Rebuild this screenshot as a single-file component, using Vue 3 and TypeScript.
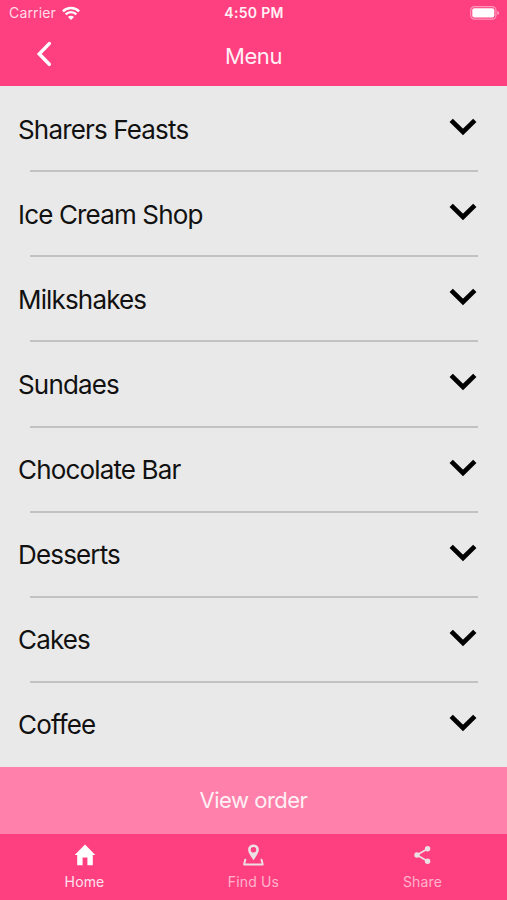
<script setup lang="ts">
import { ref } from 'vue'

interface Category {
  id: number
  name: string
}

const categories: Category[] = [
  'Sharers Feasts',
  'Ice Cream Shop',
  'Milkshakes',
  'Sundaes',
  'Chocolate Bar',
  'Desserts',
  'Cakes',
  'Coffee',
].map((name, id) => ({ id, name }))

type Tab = 'home' | 'find' | 'share'
const activeTab = ref<Tab>('home')
</script>

<template>
  <div class="screen">
    <header class="header">
      <div class="status">
        <div class="carrier">
          <span>Carrier</span>
          <svg class="wifi" viewBox="0 0 18 14" width="18" height="14">
            <g fill="none" stroke="#fff" stroke-width="2.4">
              <path d="M0.9 5.3C5.4 .9 12.6 .9 17.1 5.3" />
              <path d="M3.7 8.3C6.6 5.4 11.4 5.4 14.3 8.3" />
            </g>
            <path d="M6 10.9C7.6 9.3 10.4 9.3 12 10.9L9 13.9Z" fill="#fff" />
          </svg>
        </div>
        <span class="time">4:50 PM</span>
        <svg class="battery" viewBox="0 0 30 14" width="30" height="14">
          <rect x=".7" y=".7" width="25.2" height="12.4" rx="3.6" fill="none" stroke="#fff" stroke-opacity=".45" stroke-width="1.2" />
          <rect x="2.3" y="2.3" width="22" height="9.2" rx="2" fill="#fff" />
          <path d="M27.3 4.7C29.7 5.5 29.7 8.3 27.3 9.1Z" fill="#fff" fill-opacity=".5" />
        </svg>
      </div>
      <div class="navbar">
        <button class="back" type="button" aria-label="Back">
          <svg viewBox="0 0 16 26" width="16" height="26">
            <path d="M13.3 2.6L3.3 12.9L13.3 23.3" fill="none" stroke="#fff" stroke-width="3.5" stroke-linecap="round" />
          </svg>
        </button>
        <h1 class="title">Menu</h1>
      </div>
    </header>

    <ul class="list">
      <li v-for="category in categories" :key="category.id" class="row">
        <span class="name">{{ category.name }}</span>
        <svg class="chevron" viewBox="0 0 28 18" width="28" height="18">
          <path d="M2.2 2.4L14 14L25.8 2.4" fill="none" stroke="#000" stroke-width="4.7" />
        </svg>
      </li>
    </ul>

    <button class="order" type="button">View order</button>

    <nav class="tabs">
      <button class="tab" :class="{ active: activeTab === 'home' }" type="button" @click="activeTab = 'home'">
        <svg viewBox="0 0 22 22" width="22" height="22">
          <path d="M11 .4L21.3 11H18.8V21.3H13.4V13.6H8.6V21.3H3.2V11H.7Z" fill="currentColor" />
        </svg>
        <span>Home</span>
      </button>
      <button class="tab" :class="{ active: activeTab === 'find' }" type="button" @click="activeTab = 'find'">
        <svg viewBox="0 0 22 22" width="22" height="22">
          <path fill="currentColor" fill-rule="evenodd" d="M10.5 .4C7.4 .4 5.1 2.6 5.1 5.6C5.1 9.1 8.4 12.8 10.5 16.3C12.6 12.8 15.9 9.1 15.9 5.6C15.9 2.6 13.6 .4 10.5 .4ZM10.5 3A2.8 2.8 0 1 1 10.5 8.6A2.8 2.8 0 1 1 10.5 3Z" />
          <path d="M3.2 15.8H2.2L1.1 20.5H19.7L18.6 15.8H17.6" fill="none" stroke="currentColor" stroke-width="1.9" stroke-linejoin="round" />
        </svg>
        <span>Find Us</span>
      </button>
      <button class="tab" :class="{ active: activeTab === 'share' }" type="button" @click="activeTab = 'share'">
        <svg viewBox="0 0 22 22" width="22" height="22">
          <path d="M15.6 4.8L5 11L15.6 17.2" fill="none" stroke="currentColor" stroke-width="1.7" />
          <g fill="currentColor">
            <circle cx="15.6" cy="4.8" r="2.7" />
            <circle cx="5" cy="11" r="2.7" />
            <circle cx="15.6" cy="17.2" r="2.7" />
          </g>
        </svg>
        <span>Share</span>
      </button>
    </nav>
  </div>
</template>

<style>
body {
  margin: 0;
}
</style>

<style scoped>
.screen {
  display: flex;
  flex-direction: column;
  width: 507px;
  height: 900px;
  overflow: hidden;
  background: #e9e9e9;
  font-family: Inter, 'Liberation Sans', sans-serif;
}

button {
  padding: 0;
  border: 0;
  background: none;
  font: inherit;
}

svg {
  display: block;
  flex: none;
}

.header {
  height: 86px;
  flex: none;
  background: #ff4080;
  color: #fff;
}

.status {
  display: grid;
  grid-template-columns: 1fr auto 1fr;
  align-items: center;
  height: 27px;
  padding: 0 7px 0 9px;
  font-size: 14px;
  line-height: 26px;
}

.carrier {
  display: flex;
  align-items: center;
  gap: 6px;
  color: #ffdce7;
  letter-spacing: 0.15px;
}

.carrier span {
  margin-top: -1px;
}

.wifi {
  margin-top: -2px;
}

.time {
  margin: -1px 0 0 -1px;
  color: #fff0f5;
  font-weight: 600;
  font-size: 14px;
  letter-spacing: 0.3px;
}

.battery {
  justify-self: end;
  margin-top: -1px;
}

.navbar {
  display: grid;
  grid-template-columns: 1fr auto 1fr;
  align-items: center;
  height: 59px;
  padding: 0 36px;
}

.back {
  justify-self: start;
  margin-top: -5px;
}

.title {
  margin: -2px 0 0;
  color: #fff0f5;
  font-size: 22px;
  font-weight: 400;
  line-height: 30px;
  letter-spacing: -0.4px;
}

.list {
  flex: 1;
  display: grid;
  grid-template-rows: repeat(8, 1fr);
  margin: 0 0 -1px;
  padding: 1px 0 0;
  list-style: none;
}

.row {
  display: grid;
  grid-template-columns: 1fr auto;
  grid-template-rows: 1fr 2px;
  align-items: center;
  padding: 0 29px 0 18px;
}

.row:not(:last-child)::after {
  content: '';
  grid-column: 1 / -1;
  height: 2px;
  margin-left: 12px;
  background: #c2c2c2;
}

.name {
  padding-top: 2px;
  color: #111;
  font-size: 26px;
  line-height: 32px;
  letter-spacing: -0.84px;
}

.chevron {
  margin: -3px 1px 0 0;
}

.order {
  height: 67px;
  padding-bottom: 1px;
  flex: none;
  background: #ff80aa;
  color: #fff0f5;
  font-size: 22px;
  letter-spacing: -0.5px;
}

.tabs {
  display: grid;
  grid-template-columns: repeat(3, 1fr);
  height: 66px;
  flex: none;
  background: #ff4080;
}

.tab {
  display: flex;
  flex-direction: column;
  align-items: center;
  padding-top: 10px;
  color: #ebe0e4;
  font-size: 14px;
  line-height: 18px;
}

.tab span {
  margin-top: 7px;
  color: #ffb3cc;
  letter-spacing: 0.15px;
}

.tab.active {
  color: #fff;
}

.tab.active span {
  color: #ffe3ec;
}
</style>
